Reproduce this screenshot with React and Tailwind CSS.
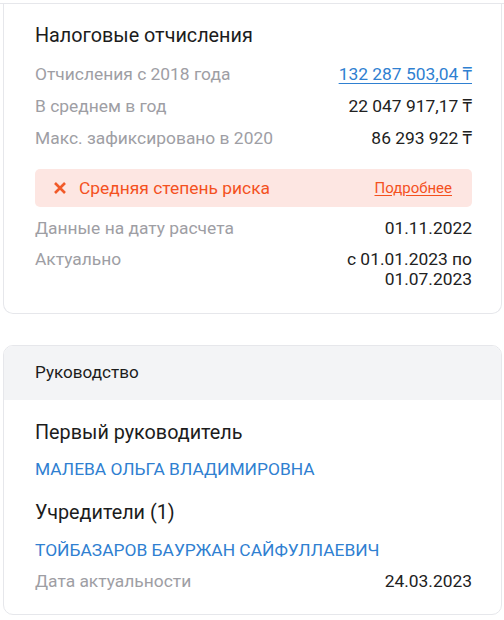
export default function App() {
  const font = { fontFamily: "Roboto, 'Noto Sans', 'DejaVu Sans', sans-serif" };
  const Row = ({ label, value, className = "", valueClass = "text-[#212121]" }) => (
    <div className={`flex justify-between items-start text-[17.4px] leading-[20px] ${className}`}>
      <span className="text-[#9e9ea4]">{label}</span>
      <span className={`text-right ${valueClass}`}>{value}</span>
    </div>
  );
  return (
    <div className="w-[504px] h-[620px] bg-white overflow-hidden" style={font}>
      <div className="h-[4px] border-b border-[#e6e7eb]" />
      <div className="ml-[3px] mr-[2px] border-x border-b border-[#e6e7eb] rounded-b-[10px] pl-[31px] pr-[29px] pt-[18px] pb-[24px]">
        <div className="text-[19.8px] leading-[28px] text-[#1c1c1c]">Налоговые отчисления</div>
        <Row
          className="mt-[14px]"
          label="Отчисления с 2018 года"
          value="132 287 503,04 ₸"
          valueClass="text-[#2f80d1] underline underline-offset-[3px]"
        />
        <Row className="mt-[12px]" label="В среднем в год" value="22 047 917,17 ₸" />
        <Row className="mt-[12px]" label="Макс. зафиксировано в 2020" value="86 293 922 ₸" />
        <div className="mt-[21px] h-[38px] rounded-[5px] bg-[#fde6e2] flex items-center pl-[18px] pr-[20px]">
          <svg width="14" height="14" viewBox="0 0 14 14" className="shrink-0">
            <path d="M2 2 L12 12 M12 2 L2 12" stroke="#f15a29" strokeWidth="2.6" strokeLinecap="butt" />
          </svg>
          <span className="ml-[12px] text-[17.4px] text-[#f4511e]">Средняя степень риска</span>
          <span className="ml-auto text-[15px] text-[#f4511e] underline underline-offset-[2px]">Подробнее</span>
        </div>
        <Row className="mt-[11px]" label="Данные на дату расчета" value="01.11.2022" />
        <Row
          className="mt-[11px]"
          label="Актуально"
          value={<>с 01.01.2023 по<br />01.07.2023</>}
        />
      </div>

      <div className="mt-[31px] ml-[3px] mr-[2px] border border-[#e6e7eb] rounded-[10px] overflow-hidden">
        <div className="bg-[#f3f4f6] h-[54px] flex items-center pl-[31px] text-[17.1px] text-[#1c1c1c]">Руководство</div>
        <div className="pl-[31px] pr-[29px] pt-[19px] pb-[23px]">
          <div className="text-[19.8px] leading-[28px] text-[#1c1c1c]">Первый руководитель</div>
          <div className="mt-[12px] text-[17.4px] leading-[20px] text-[#2f80d1]">МАЛЕВА ОЛЬГА ВЛАДИМИРОВНА</div>
          <div className="mt-[20px] text-[19.8px] leading-[28px] text-[#1c1c1c]">Учредители (1)</div>
          <div className="mt-[13px] text-[17.4px] leading-[20px] text-[#2f80d1]">ТОЙБАЗАРОВ БАУРЖАН САЙФУЛЛАЕВИЧ</div>
          <Row className="mt-[11px]" label="Дата актуальности" value="24.03.2023" />
        </div>
      </div>
    </div>
  );
}
